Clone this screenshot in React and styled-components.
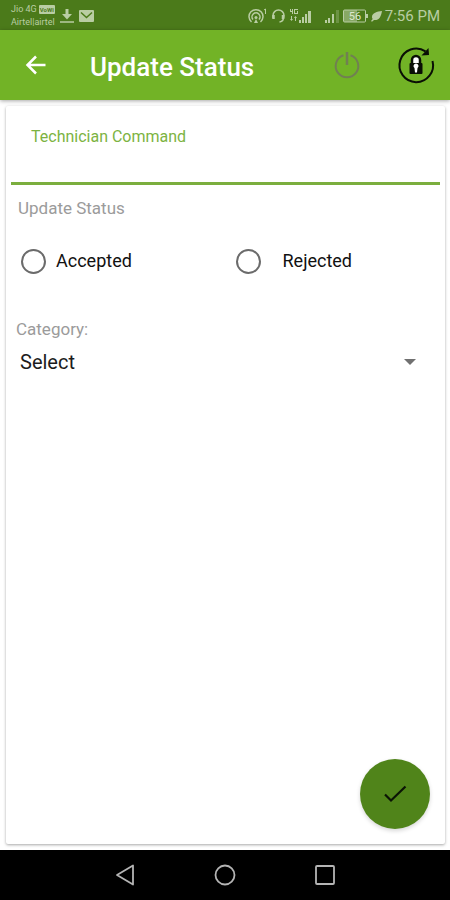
import React from "react";
import styled, { createGlobalStyle } from "styled-components";

const GlobalStyle = createGlobalStyle`
  *, *::before, *::after { box-sizing: border-box; }
  body { margin: 0; background: #fff; font-family: Roboto, "Liberation Sans", sans-serif; }
  button, input, select { font: inherit; }
`;

const Screen = styled.div`
  display: flex;
  flex-direction: column;
  min-height: 100vh;
  background: #fff;
`;

const StatusBar = styled.div`
  display: flex;
  align-items: center;
  justify-content: space-between;
  height: 30px;
  padding: 2px 10px 0 11px;
  background: #4b7a1a;
  color: #b9cda3;
`;

const StatusGroup = styled.div`
  display: flex;
  align-items: center;
  gap: ${(p) => p.$gap}px;
`;

const Carriers = styled.div`
  display: flex;
  flex-direction: column;
  font-size: 9px;
  line-height: 13px;
`;

const CarrierLine = styled.div`
  display: flex;
  align-items: center;
  gap: 2px;
`;

const WifiBadge = styled.span`
  padding: 0 1px;
  border-radius: 1px;
  background: #b9cda3;
  color: #4b7a1a;
  font-size: 6px;
  font-weight: 700;
  line-height: 9px;
`;

const Clock = styled.span`
  font-size: 15px;
  line-height: 20px;
`;

const AppBar = styled.header`
  position: relative;
  display: flex;
  align-items: center;
  height: 70px;
  padding: 0 14px 0 16px;
  background: #72b326;
  box-shadow: 0 1px 4px rgba(0, 0, 0, 0.35);
`;

const IconButton = styled.button`
  display: flex;
  align-items: center;
  justify-content: center;
  width: 40px;
  height: 40px;
  padding: 0;
  border: 0;
  background: none;
  color: ${(p) => p.$color};
  cursor: pointer;
`;

const Title = styled.h1`
  flex: 1;
  margin: 4px 0 0 34px;
  color: #fff;
  font-size: 26px;
  font-weight: 500;
  line-height: 32px;
`;

const Actions = styled.div`
  display: flex;
  gap: 29px;
`;

const Card = styled.main`
  position: relative;
  display: flex;
  flex: 1;
  flex-direction: column;
  margin: 6px 5px 6px 6px;
  padding: 0 5px;
  border-radius: 2px;
  background: #fff;
  box-shadow: 0 1px 3px rgba(0, 0, 0, 0.35);
`;

const TextField = styled.div`
  display: flex;
  flex-direction: column;
  padding-top: 21px;
  border-bottom: 3px solid #7bae3e;
`;

const FieldLabel = styled.label`
  padding-left: 20px;
  color: #7cb342;
  font-size: 16px;
  line-height: 20px;
`;

const TextInput = styled.input`
  width: 100%;
  height: 35px;
  padding: 0 20px;
  border: 0;
  outline: 0;
  background: transparent;
  color: #222;
  font-size: 20px;
`;

const RadioGroup = styled.fieldset`
  display: grid;
  grid-template-columns: 1fr 1fr;
  margin: 0;
  padding: 0;
  border: 0;
`;

const Legend = styled.legend`
  padding: 11px 0 0 7px;
  color: #9b9b9b;
  font-size: 17px;
  line-height: 24px;
`;

const RadioOption = styled.label`
  display: flex;
  align-items: center;
  gap: ${(p) => p.$gap}px;
  padding: 28px 0 28px 10px;
  color: #111;
  font-size: 18px;
  line-height: 26px;
  cursor: pointer;
`;

const Radio = styled.input`
  appearance: none;
  width: 25px;
  height: 25px;
  margin: 0;
  border: 2px solid #6b6b6b;
  border-radius: 50%;
  background: #fff;

  &:checked {
    border-color: #72b326;
    background: radial-gradient(#72b326 0 6px, #fff 7px);
  }
`;

const SelectLabel = styled.label`
  padding: 15px 0 0 5px;
  color: #9b9b9b;
  font-size: 17px;
  line-height: 24px;
`;

const SelectBox = styled.div`
  display: grid;
  align-items: center;
  margin-top: 2px;

  > * { grid-area: 1 / 1; }

  svg {
    justify-self: end;
    margin-right: 24px;
    pointer-events: none;
  }
`;

const Select = styled.select`
  appearance: none;
  width: 100%;
  height: 38px;
  padding: 0 40px 0 9px;
  border: 0;
  background: transparent;
  color: #1c1c1c;
  font-size: 20px;
`;

const ConfirmButton = styled.button`
  position: absolute;
  right: 15px;
  bottom: 15px;
  display: flex;
  align-items: center;
  justify-content: center;
  width: 70px;
  height: 70px;
  padding: 0;
  border: 0;
  border-radius: 50%;
  background: #50841a;
  color: #0b1405;
  box-shadow: 0 2px 4px rgba(0, 0, 0, 0.16);
  cursor: pointer;
`;

const NavBar = styled.nav`
  display: flex;
  align-items: center;
  justify-content: center;
  gap: 60px;
  height: 50px;
  background: #000;
`;

const DownloadIcon = () => (
  <svg width="14" height="16" viewBox="0 0 14 16" fill="none" stroke="currentColor">
    <path d="M7 1v6" strokeWidth="3" />
    <path d="M2 6h10L7 11.500z" fill="currentColor" stroke="none" />
    <path d="M0 14h14" strokeWidth="1.500" />
  </svg>
);

const MailIcon = () => (
  <svg width="15" height="12" viewBox="0 0 15 12">
    <rect width="15" height="12" rx="1" fill="currentColor" />
    <path d="M2 2.500l5.500 5 5.500-5" fill="none" stroke="#4b7a1a" strokeWidth="1.500" />
  </svg>
);

const HotspotIcon = () => (
  <svg width="20" height="16" viewBox="0 0 20 16" fill="none" stroke="currentColor" strokeWidth="1.500">
    <path d="M3.500 14A7 7 0 1 1 12.500 14" />
    <path d="M5 11.500a4 4 0 1 1 6 0" />
    <circle cx="8" cy="9.500" r="1.500" fill="currentColor" stroke="none" />
    <path d="M6 15l2-4 2 4z" fill="currentColor" stroke="none" />
    <path d="M16 2l1.500-1v5" strokeWidth="1" />
  </svg>
);

const HeadsetIcon = () => (
  <svg width="15" height="16" viewBox="0 0 15 16" fill="none" stroke="currentColor" strokeWidth="1.500">
    <path d="M2 10V7.500a5.500 5.500 0 0 1 11 0c0 3.500-1 6-4.500 6.500" />
    <path d="M2.500 7v4M12 7v4" strokeWidth="2.500" />
  </svg>
);

const DataSignalIcon = () => (
  <svg width="24" height="16" viewBox="0 0 24 16" fill="currentColor">
    <path d="M1 1h1v2h1V1h1v5H3V4H1zM5 1h4v1H6v3h2V3h1v3H5z" />
    <path d="M2 8h1v3h1l-1.500 2L1 11h1zM6.500 8L8 10H7v3H6v-3H5z" />
    <path d="M10 12h2v3h-2zM13 9h2v6h-2zM16 6h2v9h-2zM19 3h3v12h-3z" />
  </svg>
);

const WeakSignalIcon = () => (
  <svg width="16" height="16" viewBox="0 0 16 16" fill="currentColor">
    <path d="M1 12h2v3H1zM4 10h2v5H4zM8 6h2v9H8z" />
    <path d="M12 2h3v13h-3z" opacity=".3" />
  </svg>
);

const BatteryIcon = () => (
  <svg width="25" height="14" viewBox="0 0 25 14">
    <rect x=".5" y="1" width="22" height="12" rx="1" fill="none" stroke="currentColor" />
    <rect x="1" y="1" width="13" height="12" fill="currentColor" opacity=".55" />
    <path d="M23 5h2v4h-2z" fill="currentColor" />
    <text x="12" y="11" textAnchor="middle" fontSize="11" fill="#dde8cf">56</text>
  </svg>
);

const LeafIcon = () => (
  <svg width="11" height="12" viewBox="0 0 11 12" fill="currentColor">
    <path d="M11 1C6 1.500 1 3 1 7c0 1 .3 1.500.7 2L0 11l1 .8L3 10c5 .5 7-3 8-9z" />
  </svg>
);

const BackIcon = () => (
  <svg width="22" height="20" viewBox="0 0 22 20" fill="none" stroke="currentColor" strokeWidth="2.500">
    <path d="M20.500 10H3M11 1.500L2.500 10l8.500 8.500" />
  </svg>
);

const PowerIcon = () => (
  <svg width="28" height="30" viewBox="0 0 28 30" fill="none" stroke="currentColor" strokeWidth="2">
    <path d="M10.500 5.300a11.300 11.300 0 1 0 7 0" />
    <path d="M14 2v13" strokeWidth="2.500" />
  </svg>
);

const LockResetIcon = () => (
  <svg width="40" height="40" viewBox="0 0 40 40" fill="none" stroke="currentColor">
    <path d="M29.500 6.300A16.800 16.800 0 1 0 36.500 16" strokeWidth="2" />
    <path d="M32.500 3l.5 7-7.500.5z" fill="currentColor" stroke="none" />
    <path d="M16 19v-4a4 4 0 0 1 8 0v4" fill="#fff" strokeWidth="2.500" />
    <rect x="13.500" y="18" width="13" height="11" rx="1" fill="currentColor" stroke="none" />
    <path d="M20 18.500a2.500 2.500 0 0 1 1.500 4.500l-.5 4.500h-2l-.5-4.500a2.500 2.500 0 0 1 1.500-4.500z" fill="#fff" stroke="none" />
  </svg>
);

const CaretIcon = () => (
  <svg width="12" height="6" viewBox="0 0 12 6" fill="#707070">
    <path d="M0 0h12L6 6z" />
  </svg>
);

const CheckIcon = () => (
  <svg width="24" height="18" viewBox="0 0 24 18" fill="none" stroke="currentColor" strokeWidth="2.200">
    <path d="M2 9.500l6 6L22.500 1.500" />
  </svg>
);

const NavBackIcon = () => (
  <svg width="22" height="24" viewBox="0 0 22 24" fill="none" stroke="currentColor" strokeWidth="1.800" strokeLinejoin="round">
    <path d="M19 2.500v19L3 12z" />
  </svg>
);

const NavHomeIcon = () => (
  <svg width="24" height="24" viewBox="0 0 24 24" fill="none" stroke="currentColor" strokeWidth="1.800">
    <circle cx="12" cy="12" r="9.500" />
  </svg>
);

const NavRecentIcon = () => (
  <svg width="24" height="24" viewBox="0 0 24 24" fill="none" stroke="currentColor" strokeWidth="1.800">
    <rect x="3" y="3" width="18" height="18" rx="1" />
  </svg>
);

export default function App() {
  return (
    <Screen>
      <GlobalStyle />
      <StatusBar>
        <StatusGroup $gap={5}>
          <Carriers>
            <CarrierLine>
              Jio 4G <WifiBadge>VoWi</WifiBadge>
            </CarrierLine>
            <CarrierLine>Airtel|airtel</CarrierLine>
          </Carriers>
          <DownloadIcon />
          <MailIcon />
        </StatusGroup>
        <StatusGroup $gap={11}>
          <StatusGroup $gap={3}>
            <HotspotIcon />
            <HeadsetIcon />
            <DataSignalIcon />
          </StatusGroup>
          <StatusGroup $gap={3}>
            <WeakSignalIcon />
            <BatteryIcon />
            <LeafIcon />
            <Clock>7:56 PM</Clock>
          </StatusGroup>
        </StatusGroup>
      </StatusBar>
      <AppBar>
        <IconButton type="button" aria-label="Back" $color="#fff">
          <BackIcon />
        </IconButton>
        <Title>Update Status</Title>
        <Actions>
          <IconButton type="button" aria-label="Log out" $color="#718052">
            <PowerIcon />
          </IconButton>
          <IconButton type="button" aria-label="Reset password" $color="#0a0f05">
            <LockResetIcon />
          </IconButton>
        </Actions>
      </AppBar>
      <Card>
        <TextField>
          <FieldLabel htmlFor="command">Technician Command</FieldLabel>
          <TextInput id="command" type="text" />
        </TextField>
        <RadioGroup>
          <Legend>Update Status</Legend>
          <RadioOption $gap={10}>
            <Radio type="radio" name="status" value="accepted" />
            Accepted
          </RadioOption>
          <RadioOption $gap={22}>
            <Radio type="radio" name="status" value="rejected" />
            Rejected
          </RadioOption>
        </RadioGroup>
        <SelectLabel htmlFor="category">Category:</SelectLabel>
        <SelectBox>
          <Select id="category" defaultValue="">
            <option value="">Select</option>
          </Select>
          <CaretIcon />
        </SelectBox>
        <ConfirmButton type="button" aria-label="Confirm">
          <CheckIcon />
        </ConfirmButton>
      </Card>
      <NavBar aria-label="System">
        <IconButton type="button" aria-label="Back" $color="#b4b4b4">
          <NavBackIcon />
        </IconButton>
        <IconButton type="button" aria-label="Home" $color="#b4b4b4">
          <NavHomeIcon />
        </IconButton>
        <IconButton type="button" aria-label="Recent apps" $color="#b4b4b4">
          <NavRecentIcon />
        </IconButton>
      </NavBar>
    </Screen>
  );
}
